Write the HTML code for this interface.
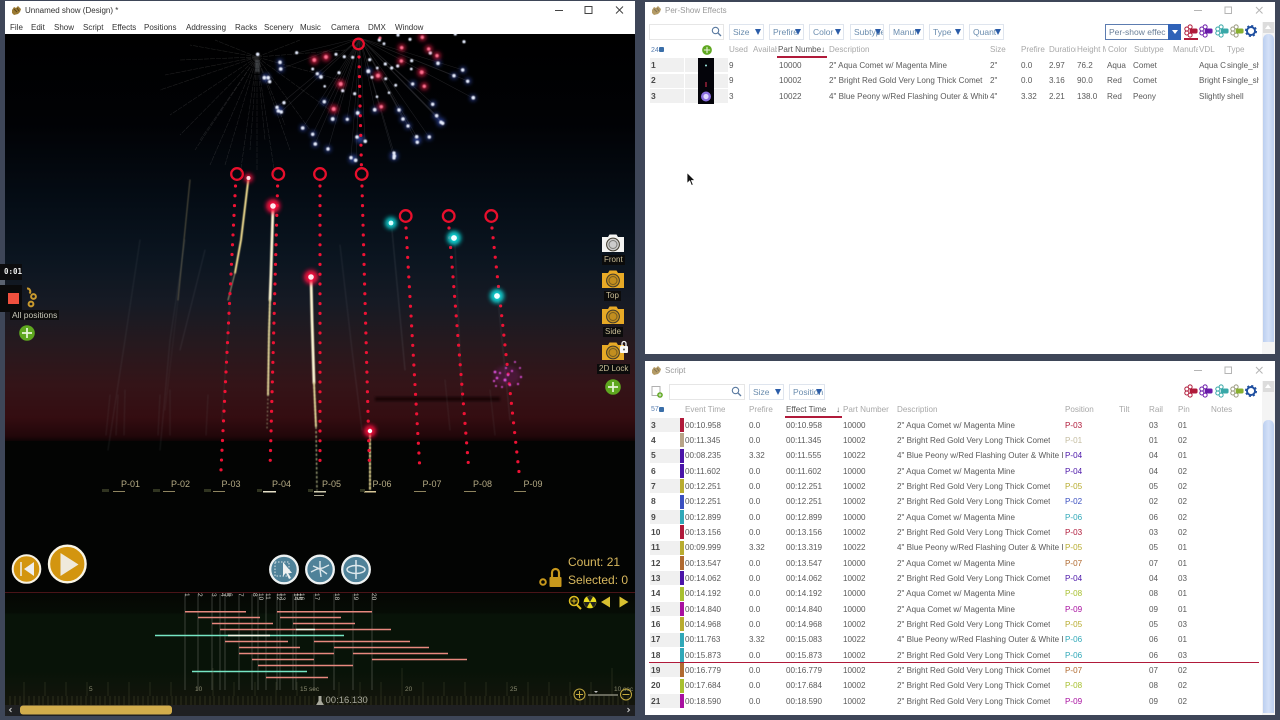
<!DOCTYPE html>
<html><head><meta charset="utf-8"><title>Unnamed show (Design)</title>
<style>
html,body{margin:0;padding:0;width:1280px;height:720px;overflow:hidden;background:#3e4658;font-family:"Liberation Sans",sans-serif;}
.a{position:absolute;white-space:nowrap;}
.win{position:absolute;background:#fff;}
.t{position:absolute;white-space:nowrap;font-size:8.1px;line-height:15px;color:#5a5a5a;overflow:hidden;filter:blur(.25px);}
.h{color:#a8a8a8;}
.n{font-weight:bold;color:#4a4a4a;font-size:8.5px;}
.m{position:absolute;top:21px;font-size:8px;line-height:13px;color:#333;white-space:nowrap;filter:blur(.2px);}
.dd{position:absolute;height:14px;border:1px solid #dfe5ee;background:#fff;font-size:8.5px;line-height:14px;color:#6a8cae;overflow:hidden;white-space:nowrap;padding-left:3px;box-sizing:content-box;filter:blur(.2px);}
.dd:after{content:"";position:absolute;right:2px;top:4px;border-left:3.5px solid transparent;border-right:3.5px solid transparent;border-top:6px solid #2a5ca8;}
.bg{position:absolute;background:#f0f0f0;}
.bar{position:absolute;left:680px;width:4px;height:14px;}
.cam{position:absolute;left:596px;font-size:8px;line-height:10px;color:#c9bd96;background:#0b0b0b;padding:0 2px;}
.thumb{position:absolute;left:1263px;width:11px;background:linear-gradient(90deg,#bccff0,#d3e0f7 50%,#bccff0);border-radius:5px 5px 0 0;}
</style></head><body>
<svg width="0" height="0" style="position:absolute"><defs>
<symbol id="fx" viewBox="0 0 16 16"><g fill="#fff" stroke="currentColor" stroke-width="1.100"><circle cx="7" cy="3.300" r="2.300"/><circle cx="3.200" cy="5.700" r="2.300"/><circle cx="3.200" cy="10.300" r="2.300"/><circle cx="7" cy="12.700" r="2.300"/></g><rect x="6.500" y="5.200" width="9" height="5.600" rx="1.800" style="fill:var(--tag,currentColor)"/></symbol>
<symbol id="gear" viewBox="0 0 16 16"><circle cx="8" cy="8" r="4.600" fill="none" stroke="#1f4fa0" stroke-width="2.200"/><circle cx="8" cy="8" r="6.100" fill="none" stroke="#1f4fa0" stroke-width="1.600" stroke-dasharray="2.400 2.400"/></symbol>
<symbol id="camg" viewBox="0 0 24 20"><path d="M1 4h6l1.500-2.500h7L17 4h6v15H1z" fill="currentColor"/><circle cx="12" cy="11.500" r="6.400" fill="#000" fill-opacity=".16" stroke="#3f3a2c" stroke-width="1"/><circle cx="12" cy="11.500" r="4" fill="none" stroke="#2c2c24" stroke-opacity=".5"/></symbol>
<symbol id="plus" viewBox="0 0 16 16"><circle cx="8" cy="8" r="7.800" fill="#5ea71f"/><path d="M8 3v10M3 8h10" stroke="#e9f5dc" stroke-width="1.700"/></symbol>
</defs></svg>

<!-- LEFT WINDOW -->
<div class="win" style="left:5px;top:1px;width:630px;height:33px;"></div>
<svg class="a" style="left:11px;top:5px" width="11" height="11" viewBox="0 0 11 11"><path d="M1 5l2-3 2 1 2-2 3 3-1 3-2 2-4 1-2-2z" fill="#9b7a33"/><path d="M3 4l3 3M6 3l2 3" stroke="#5c4518" stroke-width="1"/></svg>
<div class="a" style="left:25px;top:4px;font-size:8px;line-height:13px;color:#333;filter:blur(.2px)">Unnamed show (Design) *</div>
<span class="m" style="left:10px">File</span><span class="m" style="left:31px">Edit</span><span class="m" style="left:54px">Show</span><span class="m" style="left:83px">Script</span><span class="m" style="left:112px">Effects</span><span class="m" style="left:144px">Positions</span><span class="m" style="left:186px">Addressing</span><span class="m" style="left:235px">Racks</span><span class="m" style="left:264px">Scenery</span><span class="m" style="left:300px">Music</span><span class="m" style="left:331px">Camera</span><span class="m" style="left:368px">DMX</span><span class="m" style="left:395px">Window</span>
<svg class="a" style="left:550px;top:3px" width="80" height="15" viewBox="550 3 80 15"><path d="M555 10.500h8" stroke="#444"/><rect x="585" y="6.500" width="7" height="7" fill="none" stroke="#444"/><path d="M616 6.500l7 7M623 6.500l-7 7" stroke="#444"/></svg>

<!-- SCENE -->
<svg class="a" style="left:5px;top:34px" width="630" height="682" viewBox="5 34 630 682">
<defs>
<linearGradient id="sky" x1="0" y1="34" x2="0" y2="442" gradientUnits="userSpaceOnUse">
<stop offset="0" stop-color="#000"/><stop offset=".22" stop-color="#010205"/><stop offset=".42" stop-color="#050d16"/><stop offset=".55" stop-color="#0b1520"/><stop offset=".66" stop-color="#161a24"/><stop offset=".76" stop-color="#26191e"/><stop offset=".86" stop-color="#341418"/><stop offset=".94" stop-color="#340d11"/><stop offset=".985" stop-color="#22070a"/><stop offset="1" stop-color="#0a0304"/>
</linearGradient>
<linearGradient id="tl" x1="0" y1="592" x2="0" y2="705" gradientUnits="userSpaceOnUse"><stop offset="0" stop-color="#050604"/><stop offset=".18" stop-color="#060c05"/><stop offset=".2" stop-color="#081308"/><stop offset=".7" stop-color="#081308"/><stop offset="1" stop-color="#14150c"/></linearGradient>
<filter id="b1" x="-60%" y="-60%" width="220%" height="220%"><feGaussianBlur stdDeviation="2.200"/></filter>
<filter id="b05"><feGaussianBlur stdDeviation="0.400"/></filter>
<filter id="bs" x="-10%" y="-200%" width="120%" height="500%"><feGaussianBlur stdDeviation="1"/></filter>
<filter id="bt" x="-100%" y="-100%" width="300%" height="300%"><feGaussianBlur stdDeviation="0.500"/></filter>
</defs>
<rect x="5" y="34" width="630" height="408" fill="url(#sky)"/>
<rect x="5" y="441" width="630" height="151" fill="#030403"/>
<rect x="5" y="592" width="630" height="113" fill="url(#tl)"/>
<rect x="5" y="592" width="630" height="1" fill="#4a1418"/>
<rect x="375" y="397" width="125" height="4" fill="#0c0606" opacity=".75" filter="url(#bs)"/>

<!-- faint trails -->
<g fill="none" stroke-linecap="round" filter="url(#b05)">
<path d="M190 180L178 300" stroke="#a8986a" stroke-width="1" opacity=".5"/>
<path d="M178 300L165 410" stroke="#7c7c7c" stroke-width="1" opacity=".12"/>
<path d="M140 240L125 340L108 450" stroke="#8a9098" stroke-width="1" opacity=".14"/>
<path d="M185 240L170 340L160 450" stroke="#8a9098" stroke-width="1" opacity=".14"/>
<path d="M205 250L180 350" stroke="#8a9098" stroke-width="1" opacity=".15"/>
<path d="M232 270L222 420" stroke="#8a9098" stroke-width="1" opacity=".12"/>
<path d="M340 245L352 350L362 430" stroke="#8a9098" stroke-width="1" opacity=".15"/>
<path d="M392 230L405 370" stroke="#8a9098" stroke-width="1" opacity=".2"/>
<path d="M455 245L462 400" stroke="#8a9098" stroke-width="1" opacity=".16"/>
<path d="M498 300L510 420" stroke="#8a9098" stroke-width="1" opacity=".16"/>
<path d="M110 395L106 435M118 395L116 435M125 390L124 435M160 395L158 435M170 390L170 435M208 395L206 435M445 380L450 430M490 390L495 435" stroke="#6a6e70" stroke-width="1" opacity=".18"/>
</g>

<!-- grey burst -->
<path d="M257 57L160 90M257 57L170 115M257 57L180 135M257 57L195 150M257 57L210 165M257 57L225 165M257 57L240 175M257 57L257 170M257 57L275 175M257 57L290 150M257 57L310 130M257 57L330 110M257 57L340 80M257 57L345 50M257 57L180 60M257 57L190 45M257 57L215 40M257 57L300 40M257 57L165 75M257 57L200 140M257 57L250 150M257 57L265 140M257 57L285 125" stroke="#8d8d8d" stroke-width=".55" opacity=".24" fill="none" stroke-dasharray="5 1"/>
<rect x="255" y="60" width="5" height="12" fill="#5d6268" opacity=".5" filter="url(#b05)"/>
<!-- coloured burst -->
<path d="M360 38L302.700 128M360 38L312.700 134M360 38L315 144M360 38L328 149M360 38L351 157.700M360 38L356 160M360 38L357 137M360 38L365 141M360 38L394 153M360 38L394 158M360 38L416.700 136.700M360 38L417 142M360 38L429 137M360 38L441 122M360 38L443 123M360 38L437 116M360 38L433 104M360 38L473 98M360 38L468 81M360 38L454 76M360 38L463 70M360 38L281 69M360 38L277 107M360 38L281 112M360 38L297 53M360 38L399 110M360 38L403 119M360 38L408 126M360 38L333 119M360 38L347 119M360 38L324 102M360 38L375 110M360 38L412 84" stroke="#a0a0a8" stroke-width=".55" opacity=".2" fill="none"/>

<!-- dots: blue / white -->
<g filter="url(#b05)">
<g fill="#3a5bd0" opacity=".7" filter="url(#b1)">
<circle cx="280" cy="62" r="3"/><circle cx="281" cy="69" r="3"/><circle cx="266" cy="78" r="4"/><circle cx="279" cy="110" r="4"/><circle cx="303" cy="128" r="3"/><circle cx="313" cy="134" r="3"/><circle cx="315" cy="144" r="3"/><circle cx="328" cy="149" r="3"/><circle cx="353" cy="159" r="4"/><circle cx="360" cy="139" r="4"/><circle cx="358" cy="113" r="3"/><circle cx="347" cy="119" r="3"/><circle cx="333" cy="119" r="3"/><circle cx="324" cy="102" r="3"/><circle cx="319" cy="75" r="3"/><circle cx="394" cy="156" r="4"/><circle cx="417" cy="140" r="4"/><circle cx="429" cy="137" r="3"/><circle cx="441" cy="122" r="4"/><circle cx="436" cy="116" r="3"/><circle cx="433" cy="104" r="3"/><circle cx="454" cy="76" r="3"/><circle cx="463" cy="70" r="3"/><circle cx="468" cy="81" r="3"/><circle cx="473" cy="98" r="3"/><circle cx="438" cy="63" r="3"/><circle cx="403" cy="119" r="3"/><circle cx="408" cy="126" r="3"/><circle cx="399" cy="110" r="3"/><circle cx="413" cy="84" r="3"/><circle cx="375" cy="110" r="3"/><circle cx="369" cy="71" r="3"/>
</g>
<g fill="#e6edff" stroke="#e6edff" stroke-width=".6">
<circle cx="257.700" cy="54.300" r="1.500"/><circle cx="280" cy="62.300" r="1.500"/><circle cx="280.700" cy="69" r="1.500"/><circle cx="264.300" cy="77.700" r="1.500"/><circle cx="268.300" cy="77.700" r="1.500"/><circle cx="269.700" cy="81.700" r="1.400"/><circle cx="296.700" cy="52.700" r="1.300"/><circle cx="284" cy="102.700" r="1.400"/><circle cx="277" cy="107.300" r="1.400"/><circle cx="278.300" cy="111" r="1.400"/><circle cx="281.300" cy="112" r="1.400"/><circle cx="302.700" cy="128" r="1.500"/><circle cx="312.700" cy="134.300" r="1.400"/><circle cx="315.300" cy="144" r="1.500"/><circle cx="328" cy="149" r="1.400"/><circle cx="351" cy="157.700" r="1.400"/><circle cx="355.700" cy="160.300" r="1.500"/><circle cx="357" cy="137" r="1.500"/><circle cx="365.300" cy="141.300" r="1.500"/><circle cx="357.700" cy="113" r="1.600"/><circle cx="347.300" cy="119.300" r="1.300"/><circle cx="332.700" cy="119" r="1.600"/><circle cx="324.300" cy="101.700" r="1.400"/><circle cx="321" cy="77" r="1.600"/><circle cx="317.300" cy="73.700" r="1.300"/><circle cx="312.700" cy="69" r="1.200"/><circle cx="342.700" cy="90.700" r="1.300"/><circle cx="354.700" cy="93.700" r="1.300"/><circle cx="324.700" cy="86.300" r="1"/><circle cx="339" cy="72.700" r="1.300"/><circle cx="336" cy="54.300" r="1.300"/><circle cx="344.300" cy="56.700" r="1.300"/><circle cx="352.700" cy="57.300" r="1.300"/><circle cx="369.700" cy="59.700" r="1.300"/><circle cx="368.300" cy="71.300" r="1.700"/><circle cx="372" cy="77.300" r="1.300"/><circle cx="385.300" cy="64" r="1.300"/><circle cx="391.700" cy="68" r="1.300"/><circle cx="397.700" cy="66" r="1.300"/><circle cx="411.700" cy="60.700" r="1.300"/><circle cx="411.300" cy="69" r="1.100"/><circle cx="385.700" cy="78.700" r="1.200"/><circle cx="395.700" cy="85.300" r="1.200"/><circle cx="389" cy="92.700" r="1"/><circle cx="377" cy="96.700" r="1"/><circle cx="374.700" cy="109.700" r="1.500"/><circle cx="399" cy="110" r="1.400"/><circle cx="403" cy="119" r="1.500"/><circle cx="408" cy="126" r="1.300"/><circle cx="412.700" cy="84" r="1.300"/><circle cx="432.700" cy="104.300" r="1.400"/><circle cx="436.700" cy="115.700" r="1.400"/><circle cx="441" cy="122.300" r="1.400"/><circle cx="442.700" cy="123.300" r="1.400"/><circle cx="416.700" cy="136.700" r="1.400"/><circle cx="417.300" cy="142.300" r="1.400"/><circle cx="429.300" cy="137" r="1.400"/><circle cx="394" cy="153" r="1.300"/><circle cx="394.300" cy="156" r="1.500"/><circle cx="394" cy="158" r="1.300"/><circle cx="454" cy="75.700" r="1.400"/><circle cx="462.700" cy="70" r="1.400"/><circle cx="467.700" cy="81.300" r="1.400"/><circle cx="473.300" cy="97.700" r="1.500"/><circle cx="438" cy="63.300" r="1.500"/><circle cx="430.300" cy="53" r="1.400"/><circle cx="410" cy="39.300" r="1.300"/><circle cx="398" cy="35" r="1.300"/><circle cx="384" cy="43.700" r="1.100"/><circle cx="379.300" cy="40" r="1.300"/><circle cx="455.300" cy="34" r="1.300"/><circle cx="464" cy="41.700" r="1.300"/><circle cx="377.300" cy="68" r="1.100"/>
</g>
<g fill="#ff1f50" opacity=".8" filter="url(#b1)">
<circle cx="314.300" cy="60" r="4"/><circle cx="326" cy="57" r="4"/><circle cx="340.700" cy="84" r="4"/><circle cx="333.700" cy="109" r="4"/><circle cx="381.300" cy="106.700" r="3.500"/><circle cx="378" cy="75.700" r="4"/><circle cx="401.700" cy="47.700" r="3.500"/><circle cx="401.300" cy="61" r="3.500"/><circle cx="421.700" cy="72.300" r="4"/><circle cx="424.300" cy="86.300" r="3.500"/><circle cx="428.700" cy="49" r="3.500"/><circle cx="437" cy="55.700" r="3.500"/><circle cx="422.300" cy="37.300" r="3.500"/>
</g>
<g fill="#ff7090" stroke="#ff7090" stroke-width=".5">
<circle cx="314.300" cy="60" r="1.700"/><circle cx="326" cy="57" r="1.700"/><circle cx="340.700" cy="84" r="1.800"/><circle cx="333.700" cy="109" r="1.800"/><circle cx="381.300" cy="106.700" r="1.500"/><circle cx="378" cy="75.700" r="1.800"/><circle cx="401.700" cy="47.700" r="1.500"/><circle cx="401.300" cy="61" r="1.500"/><circle cx="421.700" cy="72.300" r="1.700"/><circle cx="424.300" cy="86.300" r="1.500"/><circle cx="428.700" cy="49" r="1.500"/><circle cx="437" cy="55.700" r="1.500"/><circle cx="422.300" cy="37.300" r="1.500"/><circle cx="380" cy="38" r="1.300"/>
</g>
</g>

<!-- bright trails -->
<g fill="none" stroke-linecap="round" filter="url(#bt)">
<path d="M248.500 178L241 240L235 273" stroke="#f0dc90" stroke-width="2"/>
<path d="M235 273L228 300" stroke="#9c9170" stroke-width="1"/>
<path d="M273 206L271 273L270 300" stroke="#fbf4d2" stroke-width="2.800"/>
<path d="M270 300L269 333L268 395" stroke="#e0d498" stroke-width="2" stroke-dasharray="2.500 1.200"/>
<path d="M268 395L267 430" stroke="#8f8a6a" stroke-width="1" stroke-dasharray="1 3"/>
<path d="M311 277L312 320L314 383" stroke="#fbf4d2" stroke-width="2.800"/>
<path d="M314 383L316 427" stroke="#e0d498" stroke-width="2" stroke-dasharray="2.500 1.200"/>
<path d="M316 427L317 490" stroke="#a8ac80" stroke-width="1.300" stroke-dasharray="1.500 3"/>
<path d="M370 431L370 490" stroke="#efe09a" stroke-width="1.800" stroke-dasharray="2 2"/>
</g>

<!-- red dotted lines -->
<g fill="none" stroke="#ee1234" stroke-width="3.200" stroke-linecap="round" stroke-dasharray="0 9.800">
<path d="M235.500 186L221 470"/><path d="M277.600 186L270 470"/><path d="M320 186L320 470"/><path d="M362 186L369.500 470"/><path d="M406 228L420 472"/><path d="M449 228L469 472"/><path d="M492 228L519 472"/><path d="M359 57L361.500 170"/>
</g>
<g fill="none" stroke="#e80f2c" stroke-width="2.300">
<circle cx="358.500" cy="44" r="5.300"/><circle cx="237" cy="174" r="5.800"/><circle cx="278.300" cy="174" r="5.800"/><circle cx="320" cy="174" r="5.800"/><circle cx="361.700" cy="174" r="5.800"/><circle cx="405.700" cy="216" r="5.800"/><circle cx="448.700" cy="216" r="5.800"/><circle cx="491.300" cy="216" r="5.800"/>
</g>

<!-- heads -->
<circle cx="273" cy="206" r="7" fill="#ff1040" opacity=".95" filter="url(#b1)"/><circle cx="273" cy="206" r="2.800" fill="#ffe8ee"/>
<circle cx="311" cy="277" r="7" fill="#ff1040" opacity=".95" filter="url(#b1)"/><circle cx="311" cy="277" r="2.800" fill="#ffe8ee"/>
<circle cx="248.500" cy="178" r="4.500" fill="#ff1040" opacity=".85" filter="url(#b1)"/><circle cx="248.500" cy="178" r="2" fill="#ffe0e6"/>
<circle cx="370" cy="431" r="6" fill="#ff1040" opacity=".9" filter="url(#b1)"/><circle cx="370" cy="431" r="2.200" fill="#fff"/>
<circle cx="391" cy="223" r="6" fill="#10d8d8" opacity=".9" filter="url(#b1)"/><circle cx="391" cy="223" r="2.400" fill="#d8ffff"/>
<circle cx="454" cy="238" r="7" fill="#10d8d8" opacity=".95" filter="url(#b1)"/><circle cx="454" cy="238" r="2.900" fill="#f0ffff"/>
<circle cx="497" cy="296" r="7" fill="#10d8d8" opacity=".95" filter="url(#b1)"/><circle cx="497" cy="296" r="2.900" fill="#f0ffff"/>
<!-- magenta cluster -->
<ellipse cx="507" cy="376" rx="13" ry="10" fill="#a020a0" opacity=".22" filter="url(#b1)"/>
<g fill="#e050e0" filter="url(#b05)"><circle cx="495" cy="372" r="1.400"/><circle cx="497" cy="378" r="1.300"/><circle cx="494" cy="381" r="1.100"/><circle cx="500" cy="373" r="1.100"/><circle cx="505" cy="380" r="1.500"/><circle cx="508" cy="375" r="1.200"/><circle cx="512" cy="371" r="1.100"/><circle cx="520" cy="368" r="1"/><circle cx="521" cy="377" r="1.100"/><circle cx="518" cy="384" r="1.100"/><circle cx="510" cy="385" r="1.100"/><circle cx="502" cy="387" r="1"/><circle cx="515" cy="362" r="1"/><circle cx="506" cy="368" r="1"/><circle cx="496" cy="386" r="1"/></g>

<!-- position pads -->
<g fill="#8f8560"><rect x="113" y="491" width="12" height="1"/><rect x="163" y="491" width="12" height="1"/><rect x="213" y="491" width="12" height="1"/><rect x="263" y="491" width="13" height="1.500" fill="#e6e0c8"/><rect x="314" y="491" width="12" height="1.500" fill="#d0ccb0"/><rect x="314" y="495" width="10" height="1" fill="#aaa690"/><rect x="364" y="491" width="12" height="1.500" fill="#d8c898"/><rect x="414" y="491" width="12" height="1"/><rect x="464" y="491" width="12" height="1"/><rect x="514" y="491" width="12" height="1"/></g>
<g fill="#3c4028" opacity=".8"><rect x="102" y="489" width="7" height="3"/><rect x="153" y="489" width="7" height="3"/><rect x="204" y="489" width="7" height="3"/><rect x="257" y="489" width="5" height="3"/><rect x="308" y="489" width="5" height="3"/><rect x="360" y="489" width="5" height="3"/></g>
<g font-family="Liberation Sans,sans-serif" font-size="9" fill="#b5ab85"><text x="121" y="487">P-01</text><text x="171" y="487">P-02</text><text x="221.500" y="487">P-03</text><text x="272" y="487">P-04</text><text x="322" y="487">P-05</text><text x="372.500" y="487">P-06</text><text x="422.500" y="487">P-07</text><text x="473" y="487">P-08</text><text x="523.500" y="487">P-09</text></g>

<!-- transport -->
<circle cx="26.500" cy="569" r="13.800" fill="#d3950f" stroke="#f7f3e6" stroke-width="2"/>
<path d="M21 562v14" stroke="#eee" stroke-width="1.500"/><path d="M34 562v14l-10-7z" fill="#eee"/>
<circle cx="67.300" cy="564" r="18.300" fill="#d3950f" stroke="#f9f5e6" stroke-width="2.400"/>
<path d="M60.500 553v23l18-11.500z" fill="#efe9dc"/>
<g fill="#4f8299" stroke="#eef2f2" stroke-width="2.300"><circle cx="284" cy="569.500" r="13.800"/><circle cx="320" cy="569.500" r="13.800"/><circle cx="356" cy="569.500" r="13.800"/></g>
<rect x="275" y="562" width="14" height="14" fill="none" stroke="#d8e4e8" stroke-dasharray="1.500 1.500"/>
<path d="M283 562v14l3-3 3 6 2-1-3-5h4z" fill="#eef2f2"/>
<path d="M311 572l6-3 6-1 6-3M320 561l0 8 1 8M313 566l7 3 7 5" stroke="#dde8ec" stroke-width="1.400" fill="none"/>
<ellipse cx="356" cy="569.500" rx="9" ry="4" fill="none" stroke="#dde8ec" stroke-width="1.500"/><path d="M356 560v19" stroke="#dde8ec" stroke-width="1.500"/>

<!-- count -->
<g font-family="Liberation Sans,sans-serif" font-size="12" fill="#d8b85e"><text x="568" y="566">Count: 21</text><text x="568" y="584">Selected: 0</text></g>
<g fill="#c8981c"><rect x="549.500" y="577" width="12" height="10" rx="1"/><path d="M552 577v-4.500a3.500 3.500 0 0 1 7 0v4.500" fill="none" stroke="#c8981c" stroke-width="2.200"/><circle cx="543" cy="582" r="2.800" fill="none" stroke="#c8981c" stroke-width="2"/></g>
<circle cx="574" cy="601" r="4.500" fill="#1a1a08" stroke="#e0c020" stroke-width="1.500"/><path d="M577 605l4 4" stroke="#e0c020" stroke-width="2"/><path d="M571.500 601h5M574 598.500v5" stroke="#e0c020"/>
<circle cx="590" cy="602" r="6.300" fill="#e8dc20"/><path d="M590 602l-3-5.300a6 6 0 0 1 6 0zM590 602l6 0a6 6 0 0 1-3 5.300zM590 602l-3 5.300a6 6 0 0 1-3-5.300z" fill="#222"/>
<path d="M610 596.500v11l-9-5.500zM619.500 596.500v11l9-5.500z" fill="#d8c030"/>

<!-- timeline -->
<g stroke="#d9d9d0" stroke-opacity=".3" stroke-width=".8"><path d="M185 594V690M198 594V690M212 594V690M220 594V690M225 594V690M239 594V690M252 594V690M258 594V690M266 594V690M277 594V690M280 594V690M293 594V690M296 594V690M314 594V690M334 594V690M353 594V690M372 594V690"/></g>
<g font-family="Liberation Sans,sans-serif" font-size="6.500" fill="#c8c8c0">
<text transform="rotate(90 185 593)" x="185" y="593">1</text><text transform="rotate(90 198 593)" x="198" y="593">2</text><text transform="rotate(90 212 593)" x="212" y="593">3</text><text transform="rotate(90 221 593)" x="221" y="593">4</text><text transform="rotate(90 225 593)" x="225" y="593">5</text><text transform="rotate(90 228 593)" x="228" y="593">6</text><text transform="rotate(90 239 593)" x="239" y="593">7</text><text transform="rotate(90 253 593)" x="253" y="593">8</text><text transform="rotate(90 259 593)" x="259" y="593">10</text><text transform="rotate(90 266 593)" x="266" y="593">11</text><text transform="rotate(90 277 593)" x="277" y="593">12</text><text transform="rotate(90 281 593)" x="281" y="593">13</text><text transform="rotate(90 294 593)" x="294" y="593">14</text><text transform="rotate(90 297 593)" x="297" y="593">15</text><text transform="rotate(90 300 593)" x="300" y="593">16</text><text transform="rotate(90 315 593)" x="315" y="593">17</text><text transform="rotate(90 335 593)" x="335" y="593">18</text><text transform="rotate(90 354 593)" x="354" y="593">19</text><text transform="rotate(90 372 593)" x="372" y="593">20</text>
</g>
<g stroke="#e8897f" stroke-width="1.500"><path d="M185 611.700H246M277 611.700H372M198 617.500H260M280 617.500H341M212 623.500H273M293 623.500H355M220 629.500H391M225 641.500H288M314 641.500H410M239 647.500H300M334 647.500H429M239 653.500H334M353 653.500H448M252 659.500H314M372 659.500H467M258 665.500H353M266 677.500H328"/></g>
<g stroke="#76e6c4" stroke-width="1.500"><path d="M155 635.500H344M192 671.500H307"/></g>
<path d="M228 635.500H270M296 629.500H315" stroke="#f4f4e4" stroke-width="1.500"/>
<g stroke="#5a5a38" stroke-width=".7" opacity=".55">
<path d="M10 696V705M15 696V705M20 696V705M24 696V705M29 696V705M34 696V705M39 696V705M43 696V705M48 696V705M53 696V705M58 696V705M62 696V705M67 696V705M72 696V705M77 696V705M81 696V705M86 696V705M91 696V705M96 696V705M100 696V705M105 696V705M110 696V705M115 696V705M119 696V705M124 696V705M129 696V705M134 696V705M138 696V705M143 696V705M148 696V705M153 696V705M157 696V705M162 696V705M167 696V705M172 696V705M176 696V705M181 696V705M186 696V705M191 696V705M195 696V705M200 696V705M205 696V705M210 696V705M214 696V705M219 696V705M224 696V705M229 696V705M233 696V705M238 696V705M243 696V705M248 696V705M252 696V705M257 696V705M262 696V705M267 696V705M271 696V705M276 696V705M281 696V705M286 696V705M290 696V705M295 696V705M300 696V705M305 696V705M309 696V705M314 696V705M319 696V705M324 696V705M328 696V705M333 696V705M338 696V705M343 696V705M347 696V705M352 696V705M357 696V705M362 696V705M366 696V705M371 696V705M376 696V705M381 696V705M385 696V705M390 696V705M395 696V705M400 696V705M404 696V705M409 696V705M414 696V705M419 696V705M423 696V705M428 696V705M433 696V705M438 696V705M442 696V705M447 696V705M452 696V705M457 696V705M461 696V705M466 696V705M471 696V705M476 696V705M480 696V705M485 696V705M490 696V705M495 696V705M499 696V705M504 696V705M509 696V705M514 696V705M518 696V705M523 696V705M528 696V705M533 696V705M537 696V705M542 696V705M547 696V705M552 696V705M556 696V705M561 696V705M566 696V705M571 696V705M575 696V705M580 696V705M585 696V705M590 696V705M594 696V705M599 696V705M604 696V705M609 696V705M613 696V705M618 696V705M623 696V705M628 696V705"/>
<path d="M24 682V696M45 682V696M66 682V696M87 682V696M108 682V696M129 682V696M150 682V696M171 682V696M213 668V696M234 682V696M255 682V696M276 682V696M297 682V696M339 682V696M360 682V696M381 682V696M402 668V696M423 682V696M444 682V696M465 682V696M486 682V696M507 682V696M528 682V696M549 682V696M570 682V696M591 682V696M612 668V696" stroke="#4a4d34"/>
</g>
<g font-family="Liberation Sans,sans-serif" font-size="6.500" fill="#8a8a70"><text x="89" y="691">5</text><text x="195" y="691">10</text><text x="300" y="691">15 sec</text><text x="405" y="691">20</text><text x="510" y="691">25</text><text x="614" y="691">10 sec</text></g>
<path d="M318.500 696h3v5l3 5h-9l3-5z" fill="#a8a89c"/>
<text x="325.500" y="703" font-family="Liberation Sans,sans-serif" font-size="9.500" fill="#a8a89c">00:16.130</text>
<circle cx="579.500" cy="694.500" r="5.500" fill="none" stroke="#c4aa40" stroke-width="1"/><path d="M576 694.500h7M579.500 691v7" stroke="#c4aa40"/>
<circle cx="626" cy="694.500" r="5.500" fill="none" stroke="#c4aa40" stroke-width="1"/><path d="M622.500 694.500h7" stroke="#c4aa40"/>
<path d="M588 695h30" stroke="#9c9c8c" stroke-width="1.200"/><path d="M594 691h4l-2 2z" fill="#bbb"/>

<!-- scrollbar -->
<rect x="5" y="705" width="630" height="11" fill="#1f2022"/>
<rect x="20" y="705.500" width="152" height="9" rx="3" fill="#d2ad4c"/>
<path d="M11.500 708l-2 2 2 2M627.500 708l2 2-2 2" stroke="#cfcfcf" fill="none"/>
</svg>

<!-- left overlays -->
<div class="a" style="left:0;top:264px;width:22px;height:16px;background:#0c0c0e;color:#eee;font:bold 7.5px/16px 'DejaVu Sans Mono',monospace;text-indent:4px;">0:01</div>
<div class="a" style="left:0;top:280px;width:5px;height:5px;background:#5a6270"></div>
<div class="a" style="left:0;top:285px;width:22px;height:27px;background:#0a0a0b"></div>
<div class="a" style="left:8px;top:293px;width:11px;height:11px;background:#f0503e"></div>
<svg class="a" style="left:25px;top:287px" width="14" height="22" viewBox="0 0 14 22"><g fill="none" stroke="#c99a2e" stroke-width="2"><circle cx="8.500" cy="9.500" r="2.400"/><circle cx="6" cy="17" r="2.400"/><path d="M2 1.500a3 3 0 0 1 2.500 5"/></g></svg>
<div class="a" style="left:10px;top:310px;font-size:8.500px;line-height:10px;color:#c8c8b8;background:#0c0c0c;padding:0 2px;">All positions</div>
<svg class="a" style="left:19px;top:325px" width="16" height="16"><use href="#plus"/></svg>
<div class="a" style="left:0;top:305px;width:5px;height:7px;background:#0a0a0b"></div>

<svg class="a" style="left:601px;top:233px;color:#f4f4f2" width="24" height="20"><use href="#camg"/></svg>
<div class="cam" style="left:602px;top:255px;">Front</div>
<svg class="a" style="left:601px;top:269px;color:#e8aa26" width="24" height="20"><use href="#camg"/></svg>
<div class="cam" style="left:604px;top:291px;">Top</div>
<svg class="a" style="left:601px;top:305px;color:#e8aa26" width="24" height="20"><use href="#camg"/></svg>
<div class="cam" style="left:603px;top:327px;">Side</div>
<svg class="a" style="left:601px;top:341px;color:#e8aa26" width="24" height="20"><use href="#camg"/></svg>
<svg class="a" style="left:619px;top:340px" width="10" height="14"><rect x="1" y="6" width="8" height="7" rx="1" fill="#f8f8f8"/><path d="M3 6V3.500a2 2 0 0 1 4 0V6" fill="none" stroke="#f8f8f8" stroke-width="1.300"/><circle cx="5" cy="9.500" r="1" fill="#555"/></svg>
<div class="cam" style="left:597px;top:364px;">2D Lock</div>
<svg class="a" style="left:605px;top:379px" width="16" height="16"><use href="#plus"/></svg>

<!-- TOP RIGHT WINDOW -->
<div class="win" style="left:645px;top:2px;width:630px;height:352px;"></div>
<svg class="a" style="left:651px;top:5px;opacity:.75" width="11" height="11" viewBox="0 0 11 11"><path d="M1 5l2-3 2 1 2-2 3 3-1 3-2 2-4 1-2-2z" fill="#9b7a33"/><path d="M3 4l3 3M6 3l2 3" stroke="#5c4518" stroke-width="1"/></svg>
<div class="a" style="left:665px;top:4px;font-size:8px;line-height:13px;color:#999;">Per-Show Effects</div>
<svg class="a" style="left:1190px;top:3px" width="80" height="15" viewBox="1190 3 80 15"><path d="M1194 10.500h8" stroke="#b5b5b5"/><rect x="1225" y="7" width="6.500" height="6.500" fill="none" stroke="#b5b5b5"/><path d="M1256 7l6.500 6.500M1262.500 7l-6.500 6.500" stroke="#b5b5b5"/></svg>

<div class="a" style="left:649px;top:24px;width:73px;height:14px;border:1px solid #e6e6e6;"></div>
<svg class="a" style="left:711px;top:26px" width="11" height="11"><circle cx="4.500" cy="4.500" r="3.200" fill="none" stroke="#5a7aa0" stroke-width="1.100"/><path d="M7 7l3 3" stroke="#5a7aa0" stroke-width="1.300"/></svg>
<div class="dd" style="left:729px;top:24px;width:30px;">Size</div>
<div class="dd" style="left:769px;top:24px;width:30px;">Prefire</div>
<div class="dd" style="left:809px;top:24px;width:30px;">Color</div>
<div class="dd" style="left:850px;top:24px;width:29px;">Subtype</div>
<div class="dd" style="left:889px;top:24px;width:30px;">Manuf</div>
<div class="dd" style="left:929px;top:24px;width:30px;">Type</div>
<div class="dd" style="left:969px;top:24px;width:30px;">Quant</div>
<div class="a" style="left:1105px;top:24px;width:63px;height:14px;border:1px solid #5c7cb0;font-size:8.500px;line-height:14px;color:#6a7f98;text-indent:3px;overflow:hidden;">Per-show effec</div>
<div class="a" style="left:1168px;top:24px;width:13px;height:16px;background:#2f62b8;"></div>
<div class="a" style="left:1172px;top:30px;border-left:3px solid transparent;border-right:3px solid transparent;border-top:4px solid #fff;"></div>
<svg class="a" style="left:1184px;top:24px;color:#b01a3a" width="14" height="14"><use href="#fx"/></svg>
<div class="a" style="left:1184px;top:38px;width:14px;height:2px;background:#b01a3a"></div>
<svg class="a" style="left:1199px;top:24px;color:#6a1aa8" width="14" height="14"><use href="#fx"/></svg>
<svg class="a" style="left:1215px;top:24px;color:#38a8a8" width="14" height="14"><use href="#fx"/></svg>
<svg class="a" style="left:1230px;top:24px;color:#9a9a80;--tag:#88b030" width="14" height="14"><use href="#fx"/></svg>
<svg class="a" style="left:1244px;top:24px" width="14" height="14"><use href="#gear"/></svg>

<div class="t" style="left:651px;top:43px;color:#5a7fb0;font-size:7px;">24</div>
<div class="a" style="left:659px;top:47px;width:5px;height:5px;background:#3a6ea8;border-radius:1px;"></div>
<svg class="a" style="left:702px;top:45px" width="10" height="10"><use href="#plus"/></svg>
<span class="t h" style="left:729px;top:42px;">Used</span><span class="t h" style="left:753px;top:42px;width:24px;">Available</span><span class="t" style="left:778px;top:42px;width:43px;color:#555;">Part Number</span><span class="t" style="left:821px;top:42px;color:#444;">↓</span><span class="t h" style="left:829px;top:42px;">Description</span><span class="t h" style="left:990px;top:42px;">Size</span><span class="t h" style="left:1021px;top:42px;">Prefire</span><span class="t h" style="left:1049px;top:42px;width:27px;">Duration</span><span class="t h" style="left:1077px;top:42px;width:29px;">Height M</span><span class="t h" style="left:1108px;top:42px;">Color</span><span class="t h" style="left:1134px;top:42px;">Subtype</span><span class="t h" style="left:1173px;top:42px;width:25px;">Manufa</span><span class="t h" style="left:1199px;top:42px;">VDL</span><span class="t h" style="left:1227px;top:42px;">Type</span>
<div class="a" style="left:777px;top:56px;width:50px;height:2px;background:#b01a3a"></div>

<div class="bg" style="left:650px;top:58px;width:34px;height:14px"></div><div class="bg" style="left:685px;top:58px;width:13px;height:14px"></div><div class="bg" style="left:714px;top:58px;width:14px;height:14px"></div>
<div class="bg" style="left:650px;top:74px;width:34px;height:14px"></div><div class="bg" style="left:685px;top:74px;width:13px;height:14px"></div><div class="bg" style="left:714px;top:74px;width:14px;height:14px"></div>
<div class="bg" style="left:650px;top:89px;width:34px;height:14px"></div><div class="bg" style="left:685px;top:89px;width:13px;height:14px"></div><div class="bg" style="left:714px;top:89px;width:14px;height:14px"></div>
<svg class="a" style="left:698px;top:58px" width="16" height="46" viewBox="0 0 16 46"><rect width="16" height="46" fill="#04040a"/><circle cx="8" cy="7.500" r="1" fill="#9fe8e0"/><rect x="7.500" y="24" width="1" height="5" fill="#e03050"/><circle cx="8" cy="38.500" r="5" fill="#8c70e0"/><circle cx="8" cy="38.500" r="2.600" fill="#e0d8ff"/></svg>

<span class="t n" style="left:651px;top:57.500px">1</span><span class="t" style="left:729px;top:57.500px">9</span><span class="t" style="left:779px;top:57.500px">10000</span><span class="t" style="left:829px;top:57.500px">2" Aqua Comet w/ Magenta Mine</span><span class="t" style="left:990px;top:57.500px">2"</span><span class="t" style="left:1021px;top:57.500px">0.0</span><span class="t" style="left:1049px;top:57.500px">2.97</span><span class="t" style="left:1077px;top:57.500px">76.2</span><span class="t" style="left:1107px;top:57.500px">Aqua</span><span class="t" style="left:1133px;top:57.500px">Comet</span><span class="t" style="left:1199px;top:57.500px;width:27px">Aqua Comet</span><span class="t" style="left:1227px;top:57.500px;width:32px">single_shot</span>
<span class="t n" style="left:651px;top:73px">2</span><span class="t" style="left:729px;top:73px">9</span><span class="t" style="left:779px;top:73px">10002</span><span class="t" style="left:829px;top:73px;width:158px">2" Bright Red Gold Very Long Thick Comet</span><span class="t" style="left:990px;top:73px">2"</span><span class="t" style="left:1021px;top:73px">0.0</span><span class="t" style="left:1049px;top:73px">3.16</span><span class="t" style="left:1077px;top:73px">90.0</span><span class="t" style="left:1107px;top:73px">Red</span><span class="t" style="left:1133px;top:73px">Comet</span><span class="t" style="left:1199px;top:73px;width:27px">Bright Red</span><span class="t" style="left:1227px;top:73px;width:32px">single_shot</span>
<span class="t n" style="left:651px;top:88.500px">3</span><span class="t" style="left:729px;top:88.500px">3</span><span class="t" style="left:779px;top:88.500px">10022</span><span class="t" style="left:829px;top:88.500px;width:159px">4" Blue Peony w/Red Flashing Outer &amp; White Inner</span><span class="t" style="left:990px;top:88.500px">4"</span><span class="t" style="left:1021px;top:88.500px">3.32</span><span class="t" style="left:1049px;top:88.500px">2.21</span><span class="t" style="left:1077px;top:88.500px">138.0</span><span class="t" style="left:1107px;top:88.500px">Red</span><span class="t" style="left:1133px;top:88.500px">Peony</span><span class="t" style="left:1199px;top:88.500px;width:27px">Slightly</span><span class="t" style="left:1227px;top:88.500px;width:32px">shell</span>

<div class="a" style="left:1262px;top:22px;width:13px;height:332px;background:#f4f4f4"></div>
<div class="a" style="left:1263px;top:22px;width:11px;height:11px;background:#dcdcdc"></div>
<div class="a" style="left:1265px;top:25px;border-left:3.500px solid transparent;border-right:3.500px solid transparent;border-bottom:4px solid #fff;"></div>
<div class="thumb" style="top:34px;height:308px;"></div>

<!-- BOTTOM RIGHT WINDOW -->
<div class="win" style="left:645px;top:361px;width:630px;height:354px;"></div>
<svg class="a" style="left:651px;top:365px;opacity:.75" width="11" height="11" viewBox="0 0 11 11"><path d="M1 5l2-3 2 1 2-2 3 3-1 3-2 2-4 1-2-2z" fill="#9b7a33"/><path d="M3 4l3 3M6 3l2 3" stroke="#5c4518" stroke-width="1"/></svg>
<div class="a" style="left:665px;top:364px;font-size:8px;line-height:13px;color:#999;">Script</div>
<svg class="a" style="left:1190px;top:363px" width="80" height="15" viewBox="1190 363 80 15"><path d="M1194 370.500h8" stroke="#b5b5b5"/><rect x="1225" y="367" width="6.500" height="6.500" fill="none" stroke="#b5b5b5"/><path d="M1256 367l6.500 6.500M1262.500 367l-6.500 6.500" stroke="#b5b5b5"/></svg>

<svg class="a" style="left:651px;top:386px" width="12" height="12" viewBox="0 0 12 12"><rect x="1" y=".5" width="8" height="9" fill="#fff" stroke="#b0b0b0"/><circle cx="9" cy="9" r="2.800" fill="#5ea71f"/><path d="M9 7.500v3M7.500 9h3" stroke="#fff" stroke-width=".8"/></svg>
<div class="a" style="left:669px;top:384px;width:74px;height:14px;border:1px solid #e6e6e6;"></div>
<svg class="a" style="left:731px;top:386px" width="11" height="11"><circle cx="4.500" cy="4.500" r="3.200" fill="none" stroke="#5a7aa0" stroke-width="1.100"/><path d="M7 7l3 3" stroke="#5a7aa0" stroke-width="1.300"/></svg>
<div class="dd" style="left:749px;top:384px;width:30px;">Size</div>
<div class="dd" style="left:789px;top:384px;width:31px;">Position</div>
<svg class="a" style="left:1184px;top:384px;color:#b01a3a" width="14" height="14"><use href="#fx"/></svg>
<svg class="a" style="left:1199px;top:384px;color:#6a1aa8" width="14" height="14"><use href="#fx"/></svg>
<svg class="a" style="left:1215px;top:384px;color:#38a8a8" width="14" height="14"><use href="#fx"/></svg>
<svg class="a" style="left:1230px;top:384px;color:#9a9a80;--tag:#88b030" width="14" height="14"><use href="#fx"/></svg>
<svg class="a" style="left:1244px;top:384px" width="14" height="14"><use href="#gear"/></svg>

<div class="t" style="left:651px;top:402px;color:#5a7fb0;font-size:7px;">57</div>
<div class="a" style="left:659px;top:407px;width:5px;height:5px;background:#3a6ea8;border-radius:1px;"></div>
<span class="t h" style="left:685px;top:402px;">Event Time</span><span class="t h" style="left:749px;top:402px;">Prefire</span><span class="t" style="left:786px;top:402px;color:#555">Effect Time</span><span class="t" style="left:836px;top:402px;color:#444">↓</span><span class="t h" style="left:843px;top:402px;">Part Number</span><span class="t h" style="left:897px;top:402px;">Description</span><span class="t h" style="left:1065px;top:402px;">Position</span><span class="t h" style="left:1119px;top:402px;">Tilt</span><span class="t h" style="left:1149px;top:402px;">Rail</span><span class="t h" style="left:1178px;top:402px;">Pin</span><span class="t h" style="left:1211px;top:402px;">Notes</span>
<div class="a" style="left:785px;top:416px;width:57px;height:2px;background:#b01a3a"></div>

<div class="bg" style="left:650px;top:418px;width:30px;height:14px"></div><div class="bg" style="left:650px;top:449px;width:30px;height:14px"></div><div class="bg" style="left:650px;top:479px;width:30px;height:14px"></div><div class="bg" style="left:650px;top:510px;width:30px;height:14px"></div><div class="bg" style="left:650px;top:541px;width:30px;height:14px"></div><div class="bg" style="left:650px;top:571px;width:30px;height:14px"></div><div class="bg" style="left:650px;top:602px;width:30px;height:14px"></div><div class="bg" style="left:650px;top:633px;width:30px;height:14px"></div><div class="bg" style="left:650px;top:663px;width:30px;height:14px"></div><div class="bg" style="left:650px;top:694px;width:30px;height:14px"></div>

<div class="bar" style="top:418px;background:#b01a3a"></div><div class="bar" style="top:433px;background:#b8a488"></div><div class="bar" style="top:449px;background:#4a14a8"></div><div class="bar" style="top:464px;background:#4a14a8"></div><div class="bar" style="top:479px;background:#b8ac30"></div><div class="bar" style="top:495px;background:#3a4fc0"></div><div class="bar" style="top:510px;background:#30a8b8"></div><div class="bar" style="top:525px;background:#b01a3a"></div><div class="bar" style="top:541px;background:#b8ac30"></div><div class="bar" style="top:556px;background:#b06a30"></div><div class="bar" style="top:571px;background:#4a14a8"></div><div class="bar" style="top:587px;background:#a8c030"></div><div class="bar" style="top:602px;background:#a810a0"></div><div class="bar" style="top:617px;background:#b8ac30"></div><div class="bar" style="top:633px;background:#30a8b8"></div><div class="bar" style="top:648px;background:#30a8b8"></div><div class="bar" style="top:663px;background:#b06a30"></div><div class="bar" style="top:679px;background:#a8c030"></div><div class="bar" style="top:694px;background:#a810a0"></div>

<span class="t n" style="left:651px;top:417.500px">3</span><span class="t" style="left:685px;top:417.500px">00:10.958</span><span class="t" style="left:749px;top:417.500px">0.0</span><span class="t" style="left:786px;top:417.500px">00:10.958</span><span class="t" style="left:843px;top:417.500px">10000</span><span class="t" style="left:897px;top:417.500px">2" Aqua Comet w/ Magenta Mine</span><span class="t" style="left:1065px;top:417.500px;color:#b01a3a">P-03</span><span class="t" style="left:1149px;top:417.500px">03</span><span class="t" style="left:1178px;top:417.500px">01</span>
<span class="t n" style="left:651px;top:432.800px">4</span><span class="t" style="left:685px;top:432.800px">00:11.345</span><span class="t" style="left:749px;top:432.800px">0.0</span><span class="t" style="left:786px;top:432.800px">00:11.345</span><span class="t" style="left:843px;top:432.800px">10002</span><span class="t" style="left:897px;top:432.800px">2" Bright Red Gold Very Long Thick Comet</span><span class="t" style="left:1065px;top:432.800px;color:#c4bca0">P-01</span><span class="t" style="left:1149px;top:432.800px">01</span><span class="t" style="left:1178px;top:432.800px">02</span>
<span class="t n" style="left:651px;top:448.200px">5</span><span class="t" style="left:685px;top:448.200px">00:08.235</span><span class="t" style="left:749px;top:448.200px">3.32</span><span class="t" style="left:786px;top:448.200px">00:11.555</span><span class="t" style="left:843px;top:448.200px">10022</span><span class="t" style="left:897px;top:448.200px;width:166px">4" Blue Peony w/Red Flashing Outer &amp; White Inner</span><span class="t" style="left:1065px;top:448.200px;color:#4a14a8">P-04</span><span class="t" style="left:1149px;top:448.200px">04</span><span class="t" style="left:1178px;top:448.200px">01</span>
<span class="t n" style="left:651px;top:463.500px">6</span><span class="t" style="left:685px;top:463.500px">00:11.602</span><span class="t" style="left:749px;top:463.500px">0.0</span><span class="t" style="left:786px;top:463.500px">00:11.602</span><span class="t" style="left:843px;top:463.500px">10000</span><span class="t" style="left:897px;top:463.500px">2" Aqua Comet w/ Magenta Mine</span><span class="t" style="left:1065px;top:463.500px;color:#4a14a8">P-04</span><span class="t" style="left:1149px;top:463.500px">04</span><span class="t" style="left:1178px;top:463.500px">02</span>
<span class="t n" style="left:651px;top:478.800px">7</span><span class="t" style="left:685px;top:478.800px">00:12.251</span><span class="t" style="left:749px;top:478.800px">0.0</span><span class="t" style="left:786px;top:478.800px">00:12.251</span><span class="t" style="left:843px;top:478.800px">10002</span><span class="t" style="left:897px;top:478.800px">2" Bright Red Gold Very Long Thick Comet</span><span class="t" style="left:1065px;top:478.800px;color:#b8ac30">P-05</span><span class="t" style="left:1149px;top:478.800px">05</span><span class="t" style="left:1178px;top:478.800px">02</span>
<span class="t n" style="left:651px;top:494.200px">8</span><span class="t" style="left:685px;top:494.200px">00:12.251</span><span class="t" style="left:749px;top:494.200px">0.0</span><span class="t" style="left:786px;top:494.200px">00:12.251</span><span class="t" style="left:843px;top:494.200px">10002</span><span class="t" style="left:897px;top:494.200px">2" Bright Red Gold Very Long Thick Comet</span><span class="t" style="left:1065px;top:494.200px;color:#3a4fc0">P-02</span><span class="t" style="left:1149px;top:494.200px">02</span><span class="t" style="left:1178px;top:494.200px">02</span>
<span class="t n" style="left:651px;top:509.500px">9</span><span class="t" style="left:685px;top:509.500px">00:12.899</span><span class="t" style="left:749px;top:509.500px">0.0</span><span class="t" style="left:786px;top:509.500px">00:12.899</span><span class="t" style="left:843px;top:509.500px">10000</span><span class="t" style="left:897px;top:509.500px">2" Aqua Comet w/ Magenta Mine</span><span class="t" style="left:1065px;top:509.500px;color:#30a8b8">P-06</span><span class="t" style="left:1149px;top:509.500px">06</span><span class="t" style="left:1178px;top:509.500px">02</span>
<span class="t n" style="left:651px;top:524.800px">10</span><span class="t" style="left:685px;top:524.800px">00:13.156</span><span class="t" style="left:749px;top:524.800px">0.0</span><span class="t" style="left:786px;top:524.800px">00:13.156</span><span class="t" style="left:843px;top:524.800px">10002</span><span class="t" style="left:897px;top:524.800px">2" Bright Red Gold Very Long Thick Comet</span><span class="t" style="left:1065px;top:524.800px;color:#b01a3a">P-03</span><span class="t" style="left:1149px;top:524.800px">03</span><span class="t" style="left:1178px;top:524.800px">02</span>
<span class="t n" style="left:651px;top:540.200px">11</span><span class="t" style="left:685px;top:540.200px">00:09.999</span><span class="t" style="left:749px;top:540.200px">3.32</span><span class="t" style="left:786px;top:540.200px">00:13.319</span><span class="t" style="left:843px;top:540.200px">10022</span><span class="t" style="left:897px;top:540.200px;width:166px">4" Blue Peony w/Red Flashing Outer &amp; White Inner</span><span class="t" style="left:1065px;top:540.200px;color:#b8ac30">P-05</span><span class="t" style="left:1149px;top:540.200px">05</span><span class="t" style="left:1178px;top:540.200px">01</span>
<span class="t n" style="left:651px;top:555.500px">12</span><span class="t" style="left:685px;top:555.500px">00:13.547</span><span class="t" style="left:749px;top:555.500px">0.0</span><span class="t" style="left:786px;top:555.500px">00:13.547</span><span class="t" style="left:843px;top:555.500px">10000</span><span class="t" style="left:897px;top:555.500px">2" Aqua Comet w/ Magenta Mine</span><span class="t" style="left:1065px;top:555.500px;color:#b06a30">P-07</span><span class="t" style="left:1149px;top:555.500px">07</span><span class="t" style="left:1178px;top:555.500px">01</span>
<span class="t n" style="left:651px;top:570.800px">13</span><span class="t" style="left:685px;top:570.800px">00:14.062</span><span class="t" style="left:749px;top:570.800px">0.0</span><span class="t" style="left:786px;top:570.800px">00:14.062</span><span class="t" style="left:843px;top:570.800px">10002</span><span class="t" style="left:897px;top:570.800px">2" Bright Red Gold Very Long Thick Comet</span><span class="t" style="left:1065px;top:570.800px;color:#4a14a8">P-04</span><span class="t" style="left:1149px;top:570.800px">04</span><span class="t" style="left:1178px;top:570.800px">03</span>
<span class="t n" style="left:651px;top:586.200px">14</span><span class="t" style="left:685px;top:586.200px">00:14.192</span><span class="t" style="left:749px;top:586.200px">0.0</span><span class="t" style="left:786px;top:586.200px">00:14.192</span><span class="t" style="left:843px;top:586.200px">10000</span><span class="t" style="left:897px;top:586.200px">2" Aqua Comet w/ Magenta Mine</span><span class="t" style="left:1065px;top:586.200px;color:#a8c030">P-08</span><span class="t" style="left:1149px;top:586.200px">08</span><span class="t" style="left:1178px;top:586.200px">01</span>
<span class="t n" style="left:651px;top:601.500px">15</span><span class="t" style="left:685px;top:601.500px">00:14.840</span><span class="t" style="left:749px;top:601.500px">0.0</span><span class="t" style="left:786px;top:601.500px">00:14.840</span><span class="t" style="left:843px;top:601.500px">10000</span><span class="t" style="left:897px;top:601.500px">2" Aqua Comet w/ Magenta Mine</span><span class="t" style="left:1065px;top:601.500px;color:#a810a0">P-09</span><span class="t" style="left:1149px;top:601.500px">09</span><span class="t" style="left:1178px;top:601.500px">01</span>
<span class="t n" style="left:651px;top:616.800px">16</span><span class="t" style="left:685px;top:616.800px">00:14.968</span><span class="t" style="left:749px;top:616.800px">0.0</span><span class="t" style="left:786px;top:616.800px">00:14.968</span><span class="t" style="left:843px;top:616.800px">10002</span><span class="t" style="left:897px;top:616.800px">2" Bright Red Gold Very Long Thick Comet</span><span class="t" style="left:1065px;top:616.800px;color:#b8ac30">P-05</span><span class="t" style="left:1149px;top:616.800px">05</span><span class="t" style="left:1178px;top:616.800px">03</span>
<span class="t n" style="left:651px;top:632.200px">17</span><span class="t" style="left:685px;top:632.200px">00:11.763</span><span class="t" style="left:749px;top:632.200px">3.32</span><span class="t" style="left:786px;top:632.200px">00:15.083</span><span class="t" style="left:843px;top:632.200px">10022</span><span class="t" style="left:897px;top:632.200px;width:166px">4" Blue Peony w/Red Flashing Outer &amp; White Inner</span><span class="t" style="left:1065px;top:632.200px;color:#30a8b8">P-06</span><span class="t" style="left:1149px;top:632.200px">06</span><span class="t" style="left:1178px;top:632.200px">01</span>
<span class="t n" style="left:651px;top:647.500px">18</span><span class="t" style="left:685px;top:647.500px">00:15.873</span><span class="t" style="left:749px;top:647.500px">0.0</span><span class="t" style="left:786px;top:647.500px">00:15.873</span><span class="t" style="left:843px;top:647.500px">10002</span><span class="t" style="left:897px;top:647.500px">2" Bright Red Gold Very Long Thick Comet</span><span class="t" style="left:1065px;top:647.500px;color:#30a8b8">P-06</span><span class="t" style="left:1149px;top:647.500px">06</span><span class="t" style="left:1178px;top:647.500px">03</span>
<span class="t n" style="left:651px;top:662.800px">19</span><span class="t" style="left:685px;top:662.800px">00:16.779</span><span class="t" style="left:749px;top:662.800px">0.0</span><span class="t" style="left:786px;top:662.800px">00:16.779</span><span class="t" style="left:843px;top:662.800px">10002</span><span class="t" style="left:897px;top:662.800px">2" Bright Red Gold Very Long Thick Comet</span><span class="t" style="left:1065px;top:662.800px;color:#b06a30">P-07</span><span class="t" style="left:1149px;top:662.800px">07</span><span class="t" style="left:1178px;top:662.800px">02</span>
<span class="t n" style="left:651px;top:678.200px">20</span><span class="t" style="left:685px;top:678.200px">00:17.684</span><span class="t" style="left:749px;top:678.200px">0.0</span><span class="t" style="left:786px;top:678.200px">00:17.684</span><span class="t" style="left:843px;top:678.200px">10002</span><span class="t" style="left:897px;top:678.200px">2" Bright Red Gold Very Long Thick Comet</span><span class="t" style="left:1065px;top:678.200px;color:#a8c030">P-08</span><span class="t" style="left:1149px;top:678.200px">08</span><span class="t" style="left:1178px;top:678.200px">02</span>
<span class="t n" style="left:651px;top:693.500px">21</span><span class="t" style="left:685px;top:693.500px">00:18.590</span><span class="t" style="left:749px;top:693.500px">0.0</span><span class="t" style="left:786px;top:693.500px">00:18.590</span><span class="t" style="left:843px;top:693.500px">10002</span><span class="t" style="left:897px;top:693.500px">2" Bright Red Gold Very Long Thick Comet</span><span class="t" style="left:1065px;top:693.500px;color:#a810a0">P-09</span><span class="t" style="left:1149px;top:693.500px">09</span><span class="t" style="left:1178px;top:693.500px">02</span>

<div class="a" style="left:649px;top:661.500px;width:610px;height:1.500px;background:#b01a3a"></div>

<div class="a" style="left:1262px;top:381px;width:13px;height:334px;background:#f4f4f4"></div>
<div class="a" style="left:1263px;top:381px;width:11px;height:11px;background:#dcdcdc"></div>
<div class="a" style="left:1265px;top:384px;border-left:3.500px solid transparent;border-right:3.500px solid transparent;border-bottom:4px solid #fff;"></div>
<div class="thumb" style="top:420px;height:293px;"></div>

<!-- cursor -->
<svg class="a" style="left:686px;top:172px" width="10" height="15" viewBox="0 0 10 15"><path d="M1 .5v11l2.700-2.500 1.800 4.500 1.800-.7L5.500 8.500H9z" fill="#111" stroke="#fff" stroke-width=".8"/></svg>
</body></html>
